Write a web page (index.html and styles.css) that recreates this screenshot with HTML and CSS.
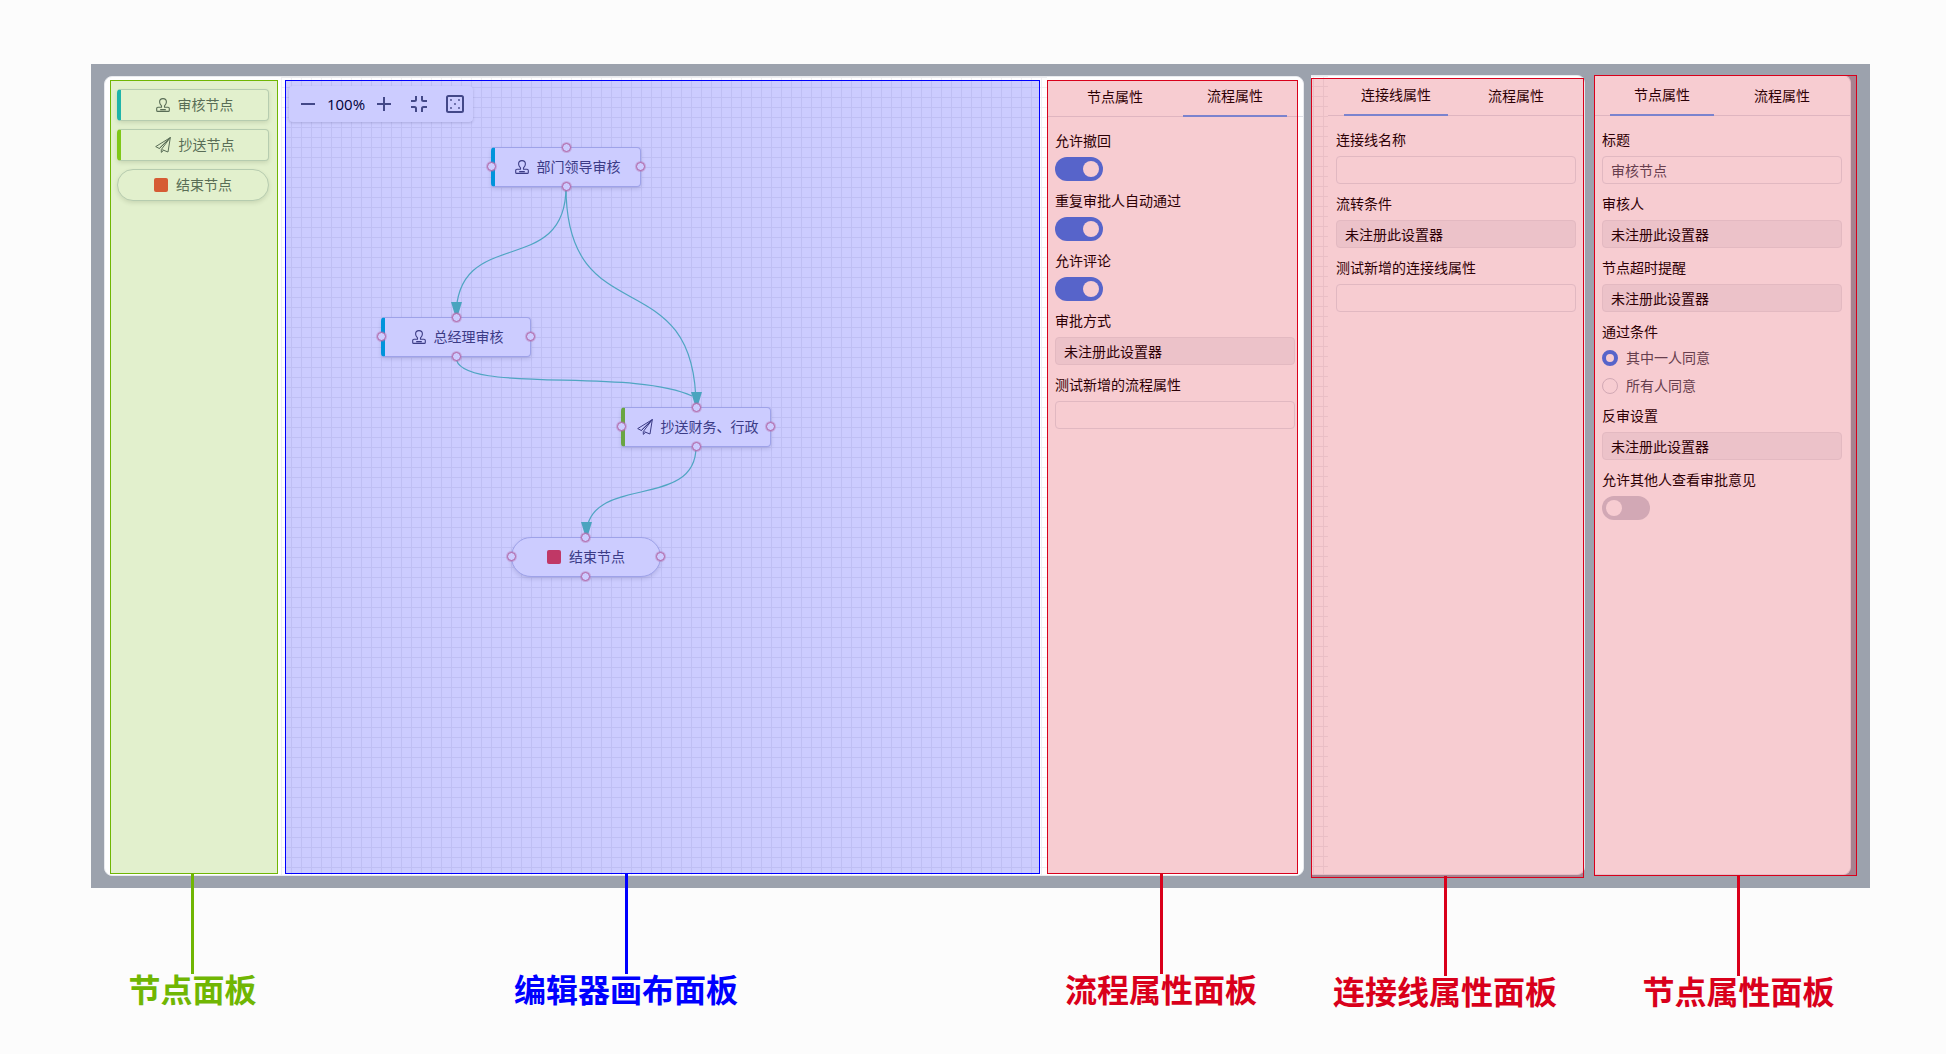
FILE: index.html
```html
<!DOCTYPE html>
<html lang="zh-CN">
<head>
<meta charset="utf-8">
<title>流程编辑器面板</title>
<link rel="stylesheet" href="styles.css">
</head>
<body>
<svg class="sprite" aria-hidden="true">
  <symbol id="stamp" viewBox="0 0 14 14">
    <path d="M5.500 9.200V7.800C4.300 6.600 3.600 5.300 3.600 3.900a3.400 3.300 0 0 1 6.800 0C10.400 5.300 9.700 6.600 8.500 7.800V9.200H12a1.300 1.300 0 0 1 1.300 1.300V12.400a1 1 0 0 1-1 1H1.700a1 1 0 0 1-1-1V10.500A1.300 1.300 0 0 1 2 9.200zM4.200 11.600H9.800" fill="none" stroke="currentColor" stroke-width="1.100" stroke-linejoin="round"/>
  </symbol>
  <symbol id="plane" viewBox="0 0 16 16">
    <path d="M15.300.6.700 9.600l3.600 1.900zM15.300.6 6.300 12.500v2.900l2.200-2M15.300.6 13 15 7.200 12.700M15.300.6 4.300 11.500" fill="none" stroke="currentColor" stroke-width="1" stroke-linejoin="round"/>
  </symbol>
</svg>

<main class="stage">
  <div class="band">
    <section class="card editor">
      <aside class="palette tint tint-green">
        <button class="node bar-teal" type="button"><svg class="ico"><use href="#stamp"/></svg>审核节点</button>
        <button class="node bar-lime" type="button"><svg class="ico ico-plane"><use href="#plane"/></svg>抄送节点</button>
        <button class="node pill" type="button"><span class="stop"></span>结束节点</button>
      </aside>

      <div class="canvas tint tint-blue">
        <div class="toolbar">
          <button class="tool" type="button" aria-label="缩小"><svg width="16" height="16"><path d="M1 8H15" stroke="currentColor" stroke-width="2"/></svg></button>
          <span class="zoom">100%</span>
          <button class="tool" type="button" aria-label="放大"><svg width="16" height="16"><path d="M1 8H15M8 1V15" stroke="currentColor" stroke-width="2"/></svg></button>
          <button class="tool gap" type="button" aria-label="适应画布"><svg width="18" height="18"><path d="M1 6H4.500Q6 6 6 4.500V1M12 1V4.500Q12 6 13.500 6H17M17 12H13.500Q12 12 12 13.500V17M6 17V13.500Q6 12 4.500 12H1" fill="none" stroke="currentColor" stroke-width="2"/></svg></button>
          <button class="tool gap" type="button" aria-label="网格"><svg width="18" height="18"><rect x="1" y="1" width="16" height="16" rx="1.500" fill="none" stroke="currentColor" stroke-width="2"/><g fill="currentColor"><circle cx="5" cy="5" r=".9"/><circle cx="13" cy="5" r=".9"/><circle cx="9" cy="9" r=".9"/><circle cx="5" cy="13" r=".9"/><circle cx="13" cy="13" r=".9"/></g></svg></button>
        </div>

        <svg class="edges" aria-hidden="true">
          <g fill="none" stroke="#63cfb3" stroke-width="1.200">
            <path d="M285 110C285 203 175 147 175 240"/>
            <path d="M285 110C285 259 415 181 415 330"/>
            <path d="M175 280C175 318 350 290 411 319"/>
            <path d="M415 370C415 435 305 395 305 460"/>
          </g>
          <g fill="#5dcdaf">
            <path d="M170 225h11l-4 13h-3z"/>
            <path d="M410 315h11l-4 13h-3z"/>
            <path d="M300 445h11l-4 13h-3z"/>
          </g>
        </svg>

        <div class="flow-node n1 bar-sky"><svg class="ico"><use href="#stamp"/></svg>部门领导审核<i class="port t"></i><i class="port r"></i><i class="port b"></i><i class="port l"></i></div>
        <div class="flow-node n2 bar-sky"><svg class="ico"><use href="#stamp"/></svg>总经理审核<i class="port t"></i><i class="port r"></i><i class="port b"></i><i class="port l"></i></div>
        <div class="flow-node n3 bar-grass"><svg class="ico ico-plane"><use href="#plane"/></svg>抄送财务、行政<i class="port t"></i><i class="port r"></i><i class="port b"></i><i class="port l"></i></div>
        <div class="flow-node n4 pill"><span class="stop"></span>结束节点<i class="port t"></i><i class="port r"></i><i class="port b"></i><i class="port l"></i></div>
      </div>

      <div class="panel tint tint-red">
        <div class="tabs" role="tablist">
          <button class="tab" type="button" role="tab">节点属性</button>
          <button class="tab active" type="button" role="tab">流程属性</button>
        </div>
        <form class="form">
          <div class="field"><label for="f1">允许撤回</label><input class="switch" type="checkbox" id="f1" checked></div>
          <div class="field"><label for="f2">重复审批人自动通过</label><input class="switch" type="checkbox" id="f2" checked></div>
          <div class="field"><label for="f3">允许评论</label><input class="switch" type="checkbox" id="f3" checked></div>
          <div class="field"><label for="f4">审批方式</label><input class="text missing" id="f4" value="未注册此设置器" readonly></div>
          <div class="field"><label for="f5">测试新增的流程属性</label><input class="text" id="f5"></div>
        </form>
      </div>
    </section>

    <section class="card side edge-card tint tint-red">
      <div class="strip"></div>
      <div class="panel">
        <div class="tabs" role="tablist">
          <button class="tab active" type="button" role="tab">连接线属性</button>
          <button class="tab" type="button" role="tab">流程属性</button>
        </div>
        <form class="form">
          <div class="field"><label for="e1">连接线名称</label><input class="text" id="e1"></div>
          <div class="field"><label for="e2">流转条件</label><input class="text missing" id="e2" value="未注册此设置器" readonly></div>
          <div class="field"><label for="e3">测试新增的连接线属性</label><input class="text" id="e3"></div>
        </form>
      </div>
    </section>

    <section class="card side node-card tint tint-red">
      <div class="panel">
        <div class="tabs" role="tablist">
          <button class="tab active" type="button" role="tab">节点属性</button>
          <button class="tab" type="button" role="tab">流程属性</button>
        </div>
        <form class="form">
          <div class="field"><label for="p1">标题</label><input class="text" id="p1" value="审核节点"></div>
          <div class="field"><label for="p2">审核人</label><input class="text missing" id="p2" value="未注册此设置器" readonly></div>
          <div class="field"><label for="p3">节点超时提醒</label><input class="text missing" id="p3" value="未注册此设置器" readonly></div>
          <fieldset class="field radios">
            <legend>通过条件</legend>
            <label class="choice"><input type="radio" name="pass" checked>其中一人同意</label>
            <label class="choice"><input type="radio" name="pass">所有人同意</label>
          </fieldset>
          <div class="field"><label for="p4">反审设置</label><input class="text missing" id="p4" value="未注册此设置器" readonly></div>
          <div class="field"><label for="p5">允许其他人查看审批意见</label><input class="switch" type="checkbox" id="p5"></div>
        </form>
      </div>
    </section>
  </div>

  <div class="captions">
    <div class="caption c-palette">节点面板</div>
    <div class="caption c-canvas">编辑器画布面板</div>
    <div class="caption c-flow">流程属性面板</div>
    <div class="caption c-edge">连接线属性面板</div>
    <div class="caption c-node">节点属性面板</div>
  </div>
</main>
</body>
</html>
```
FILE: styles.css
```css
* { box-sizing: border-box; }

body {
  margin: 0;
  background: #fcfcfc;
  color: #000;
  font: 14px/24px "Noto Sans", "Noto Sans CJK SC", sans-serif;
}

button, input {
  margin: 0;
  font: inherit;
  color: inherit;
}

.sprite {
  display: block;
  width: 0;
  height: 0;
}

.stage { padding: 64px 76px 24px 91px; }

/* Grey band with the editor and the two side cards */
.band {
  display: flex;
  align-items: flex-start;
  padding: 11px 19px 12px 13px;
  background: #9ca2ad;
}

.card {
  display: flex;
  min-height: 800px;
  background: #fff;
  border: 1px solid #e8eaee;
  border-radius: 8px;
}

.editor {
  flex: 1;
  min-width: 0;
  margin-top: 1px;
}

.side { flex: none; }

.edge-card {
  width: 274px;
  margin-left: 7px;
  border-left: 0;
  border-radius: 0 8px 8px 0;
}

.node-card {
  width: 257px;
  margin-left: 9px;
  border-left: 0;
  border-radius: 0 8px 8px 0;
}

/* Coloured region markers laid over each panel */
.tint { position: relative; }

.tint::after {
  content: "";
  position: absolute;
  pointer-events: none;
  border: 1px solid;
}

.tint-green::after {
  inset: 3px 3px 1px 5px;
  border-color: #70b603;
  background: rgba(112, 182, 3, .2);
}

.tint-blue::after {
  inset: 3px 7px 1px 4px;
  border-color: #00f;
  background: rgba(0, 0, 255, .2);
}

.tint-red::after {
  inset: 3px 5px 1px 0;
  border-color: #d9001b;
  background: rgba(217, 0, 27, .2);
}

.edge-card::after { inset: 2px 0 -4px 0; }
.node-card::after { inset: -1px -7px -2px 0; }

/* Palette */
.palette {
  flex: none;
  display: flex;
  flex-direction: column;
  gap: 8px;
  width: 176px;
  padding: 12px;
}

.node, .flow-node {
  display: flex;
  align-items: center;
  justify-content: center;
  gap: 8px;
  background: #fff;
  border: 1px solid #c9d2da;
  border-radius: 4px;
  box-shadow: 0 2px 4px rgba(0, 0, 0, .12);
  color: #545c6b;
}

.node {
  width: 152px;
  height: 32px;
  padding: 0;
}

.flow-node { border-color: #c6cbe4; color: #4b4b68; }

.bar-teal { border-left: 4px solid #0bb5d2; }
.bar-lime { border-left: 4px solid #84cd1c; }
.bar-sky { border-left: 4px solid #00bad3; }
.bar-grass { border-left: 4px solid #84cf13; }

.pill { border-radius: 20px; }

.ico {
  flex: none;
  width: 14px;
  height: 14px;
}

.ico-plane {
  width: 16px;
  height: 16px;
}

.stop {
  width: 14px;
  height: 14px;
  border-radius: 2px;
  background: #f04640;
}

/* Canvas */
.canvas {
  flex: 1;
  min-width: 0;
}

.canvas, .strip {
  background-image:
    linear-gradient(90deg, #efeff2 1px, transparent 1px),
    linear-gradient(#efeff2 1px, transparent 1px);
  background-size: 10px 10px;
}

.strip {
  flex: none;
  width: 17px;
  background-position: 2px 0;
}

.toolbar {
  display: flex;
  align-items: center;
  width: 184px;
  height: 36px;
  margin: 9px 0 0 8px;
  padding: 0 9px 0 11px;
  background: #fff;
  border-radius: 4px;
  box-shadow: 0 1px 3px rgba(0, 0, 0, .16);
}

.tool {
  display: flex;
  padding: 0;
  border: 0;
  background: none;
  color: #545a6b;
}

.tool.gap { margin-left: 18px; }

.zoom {
  flex: 1;
  text-align: center;
  font-family: "Open Sans", "Noto Sans", sans-serif;
  font-size: 15px;
}

.edges {
  position: absolute;
  top: 0;
  left: 0;
  width: 500px;
  height: 520px;
}

.flow-node {
  position: absolute;
  width: 150px;
  height: 40px;
}

.n1 { left: 210px; top: 70px; }
.n2 { left: 100px; top: 240px; }
.n3 { left: 340px; top: 330px; }
.n4 { left: 230px; top: 460px; }

.port {
  position: absolute;
  width: 9px;
  height: 9px;
  border: 1px solid #de7e90;
  border-radius: 50%;
  background: #fff;
  box-shadow: 0 0 0 1px rgba(222, 126, 144, .35);
}

.port.t { top: -5px; left: calc(50% - 5px); }
.port.b { bottom: -5px; left: calc(50% - 5px); }
.port.l { left: -5px; top: calc(50% - 5px); }
.port.r { right: -5px; top: calc(50% - 5px); }

.bar-sky .port.t, .bar-sky .port.b,
.bar-grass .port.t, .bar-grass .port.b { left: calc(50% - 6px); }
.bar-sky .port.l, .bar-grass .port.l { left: -8px; }

/* Property panels */
.panel {
  flex: none;
  width: 256px;
  background: #fff;
}

.card > .panel { border-radius: 0 8px 8px 0; }

.tabs {
  display: flex;
  height: 40px;
  padding: 0 8px;
  box-shadow: inset 0 -1px #e1e3ea;
}

.tab {
  width: 104px;
  height: 40px;
  margin: 0 8px;
  padding: 0;
  border: 0;
  background: none;
}

.tab.active { border-bottom: 2px solid #64a4fc; }

.form {
  display: flex;
  flex-direction: column;
  gap: 8px;
  padding: 12px 8px;
}

.field {
  display: flex;
  flex-direction: column;
  align-items: flex-start;
  gap: 4px;
  margin: 0;
  padding: 0;
  border: 0;
}

.text {
  width: 100%;
  height: 28px;
  padding: 0 8px;
  border: 1px solid #e4e6ec;
  border-radius: 4px;
  background: #fff;
  color: #4b4f5c;
}

.text.missing {
  background: #f2f3f5;
  border-color: #e6e8ec;
  color: #000;
}

.switch {
  appearance: none;
  display: flex;
  width: 48px;
  height: 24px;
  padding: 4px;
  border-radius: 12px;
  background: #d1d3dc;
}

.switch::before {
  content: "";
  width: 16px;
  height: 16px;
  border-radius: 50%;
  background: #fff;
}

.switch:checked {
  justify-content: flex-end;
  background: #387ef7;
}

.radios { gap: 8px; }

.radios legend {
  margin-bottom: 4px;
  padding: 0;
}

.choice {
  display: flex;
  align-items: center;
  gap: 8px;
  height: 20px;
  color: #4b4f5c;
}

.choice input {
  appearance: none;
  width: 16px;
  height: 16px;
  border: 1px solid #d1d3dc;
  border-radius: 50%;
  background: #fff;
}

.choice input:checked { border: 4px solid #387ef7; }

/* Captions hanging below the band on leader lines */
.captions {
  position: relative;
  display: flex;
  margin: -14px 0 0 19px;
}

.caption {
  flex: none;
  display: flex;
  flex-direction: column;
  align-items: center;
  font-size: 32px;
  font-weight: 700;
  line-height: 32px;
  white-space: nowrap;
}

.caption::before {
  content: "";
  width: 3px;
  height: 100px;
  background: currentColor;
}

.c-palette { width: 165px; color: #70b603; }

.c-canvas {
  flex: 1;
  padding-right: 69px;
  color: #00f;
}

.c-flow {
  width: 230px;
  margin-right: 34px;
  color: #d9001b;
}

.c-edge {
  width: 270px;
  margin-top: 2px;
  color: #d9001b;
}

.c-node {
  width: 263px;
  margin: 2px 0 0 27px;
  color: #d9001b;
}
```
